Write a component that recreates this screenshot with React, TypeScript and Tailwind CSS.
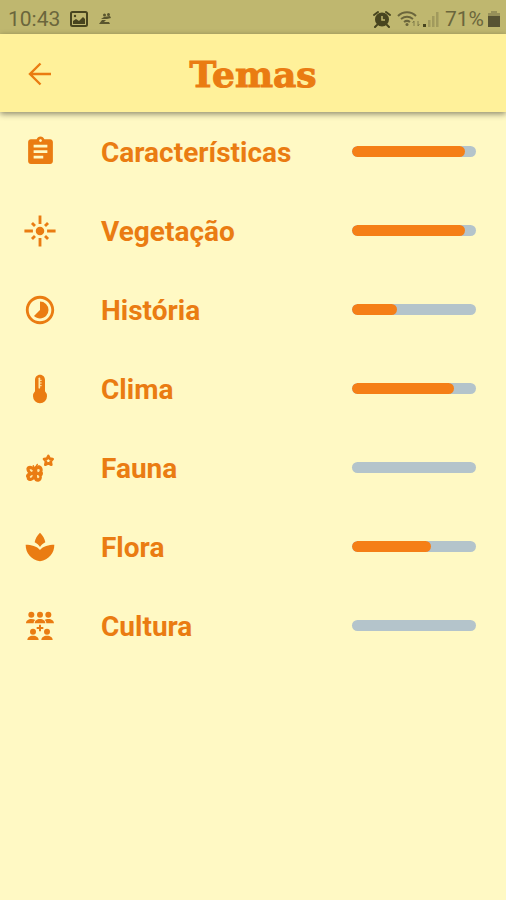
import React from 'react';
import { MdAssignment, MdFlare, MdTimelapse } from 'react-icons/md';

type Topic = {
  name: string;
  progress: number;
  icon: React.ReactNode;
};

const ThermometerIcon = () => (
  <svg viewBox="0 -5 150 150" className="size-[50px] shrink-0" fill="currentColor" aria-hidden="true">
    <path d="M75 27c-9 0-15 7-15 16v34a21 21 0 1 0 30 0V43c0-9-6-16-15-16z" />
    <path d="M73 38v28" stroke="#ffe9a8" strokeWidth="5" strokeLinecap="round" />
    <path d="M73 44h7M73 52h7M73 60h7" stroke="#ffe9a8" strokeWidth="3" />
  </svg>
);

const ButterflyIcon = () => (
  <svg viewBox="0 -9 150 150" className="size-[50px] shrink-0" aria-hidden="true">
    <path
      d="M58 66c-6-5-15-6-20-2-4 4-1 13 4 17-7 4-9 10-5 14-1 7 6 9 12 7 4-1 7-3 9-6 2 6 6 10 12 9 7-1 10-8 8-15 4-4 5-9 2-13 3-7 0-15-7-17-6-1-11 2-15 6z"
      fill="currentColor"
      stroke="currentColor"
      strokeWidth="4"
      strokeLinejoin="round"
    />
    <path d="M44 70c4-1 8 1 10 5l-5 3c-3-2-5-5-5-8zM66 71c3-3 7-3 8 0 1 4-2 7-6 8zM44 93c2-4 6-6 9-6 0 4-2 8-6 9zM66 87c4 0 7 2 7 6-1 4-5 5-7 1z" fill="#ffe9a8" />
    <path d="M58 66l-3-7M60 66l7-11" stroke="currentColor" strokeWidth="4" strokeLinecap="round" />
    <path d="M100 30l4 8 9 1-6 7 2 10-9-4-9 4 2-10-6-7 9-1z" fill="none" stroke="currentColor" strokeWidth="8" strokeLinejoin="round" />
  </svg>
);

const LotusIcon = () => (
  <svg viewBox="0 -6 150 150" className="size-[50px] shrink-0" fill="currentColor" aria-hidden="true">
    <path d="M75 26c-9 9-14 18-16 29 7 4 12 8 16 14 4-6 9-10 16-14-2-11-7-20-16-29z" />
    <path d="M32 62c17 0 34 4 43 16 9-12 26-16 43-16 0 25-16 45-43 50-27-5-43-25-43-50z" />
  </svg>
);

const PeopleIcon = () => (
  <svg viewBox="0 0 150 150" className="size-[50px] shrink-0" fill="currentColor" aria-hidden="true">
    <circle cx="49" cy="41" r="9" />
    <circle cx="75" cy="41" r="9" />
    <circle cx="100" cy="41" r="9" />
    <path d="M33 67c0-8 7-13 16-13 5 0 9 1 12 3-4 3-5 6-5 10z" />
    <path d="M59 67c0-8 7-13 16-13s16 5 16 13z" />
    <path d="M117 67c0-8-7-13-17-13-5 0-8 1-11 3 4 3 5 6 5 10z" />
    <path d="M75 71v20M65 81h20" stroke="currentColor" strokeWidth="6" />
    <circle cx="54" cy="92" r="9" />
    <circle cx="96" cy="92" r="9" />
    <path d="M37 117c0-8 7-13 17-13s17 5 17 13z" />
    <path d="M79 117c0-8 7-13 17-13s17 5 17 13z" />
  </svg>
);

const TOPICS: Topic[] = [
  { name: 'Características', progress: 91, icon: <MdAssignment size={33} /> },
  { name: 'Vegetação', progress: 91, icon: <MdFlare size={34} /> },
  { name: 'História', progress: 36, icon: <MdTimelapse size={34} /> },
  { name: 'Clima', progress: 82, icon: <ThermometerIcon /> },
  { name: 'Fauna', progress: 0, icon: <ButterflyIcon /> },
  { name: 'Flora', progress: 64, icon: <LotusIcon /> },
  { name: 'Cultura', progress: 0, icon: <PeopleIcon /> }
];

const StatusBar = () => (
  <div className="h-[34px] bg-[#bfb76f] text-[#6b663c] flex items-center justify-between pl-2 pr-1.5 pt-1 text-[21px] leading-6">
    <div className="flex items-center">
      <span>10:43</span>
      <svg viewBox="0 0 18 16" className="w-[18px] h-4 ml-2.5 text-[#48451f]" aria-hidden="true">
        <rect x="1" y="1" width="16" height="14" rx="1.5" fill="none" stroke="currentColor" strokeWidth="2" />
        <path d="M3 13V10l3-2 3 2 4-4 2 2v5z" fill="currentColor" />
        <circle cx="5" cy="5" r="1.2" fill="currentColor" />
      </svg>
      <svg viewBox="0 0 14 14" className="size-3.5 ml-2.5 text-[#5a562e]" fill="currentColor" aria-hidden="true">
        <circle cx="6.500" cy="3" r="1.5" />
        <circle cx="10.500" cy="2.500" r="1.5" />
        <path d="M3 7l3-2 6-1 1 2-4 1zM1 12l3-4 4 0-2 2h5l1 2z" />
      </svg>
    </div>
    <div className="flex items-center">
      <svg viewBox="0 0 18 18" className="size-[18px] text-[#48451f]" aria-hidden="true">
        <circle cx="9" cy="9.500" r="7" fill="currentColor" />
        <path d="M1 5l4-3M17 5l-4-3M4 15l-2 2M14 15l2 2" stroke="currentColor" strokeWidth="2" strokeLinecap="round" />
        <path d="M9 6v4h3" fill="none" stroke="#bfb76f" strokeWidth="1.5" />
      </svg>
      <svg viewBox="0 0 24 18" className="w-6 h-[18px] ml-1.5" fill="none" stroke="currentColor" strokeWidth="2" aria-hidden="true">
        <path d="M1 6c5-5 13-5 18 0M4 9c4-3 8-3 12 0M7 12c2-1.500 4-1.500 6 0" />
        <circle cx="10" cy="14.500" r="1.500" fill="currentColor" stroke="none" />
        <path d="M17 16v-5l-1.500 2M21 11v5l1.500-2" strokeWidth="1" opacity="0.7" />
      </svg>
      <svg viewBox="0 0 18 16" className="w-[18px] h-4 ml-0.5" fill="currentColor" aria-hidden="true">
        <rect x="0" y="13" width="3" height="3" fill="#48451f" />
        <g opacity="0.35">
          <rect x="5" y="9" width="2.500" height="7" />
          <rect x="9" y="5" width="2.500" height="11" />
          <rect x="13" y="1" width="2.500" height="15" />
        </g>
      </svg>
      <span className="ml-1">71%</span>
      <svg viewBox="0 0 12 18" className="w-3 h-[18px] ml-1" aria-hidden="true">
        <path d="M3 1h6v2h3v4H0V3h3z" fill="#969059" />
        <path d="M0 6h12v11H0z" fill="#575333" />
      </svg>
    </div>
  </div>
);

const TopicRow: React.FC<{ topic: Topic }> = ({ topic }) => (
  <li>
    <button type="button" className="w-full h-[79px] pl-[15px] pr-[30px] flex items-center text-left">
      <span className="w-[50px] flex justify-center shrink-0">{topic.icon}</span>
      <span className="flex-1 ml-9 pt-0.5 text-[28px] leading-8 font-bold">{topic.name}</span>
      <span
        role="progressbar"
        aria-label={topic.name}
        aria-valuenow={topic.progress}
        className="block w-[124px] h-[11px] rounded-full bg-[#b4c4cb] overflow-hidden"
      >
        <span className="block h-full rounded-full bg-[#f57f17]" style={{ width: `${topic.progress}%` }} />
      </span>
    </button>
  </li>
);

const App: React.FC = () => {
  return (
    <div className="min-h-screen bg-[#fff9c4] text-[#ea7c12] font-['Roboto',sans-serif]">
      <StatusBar />
      <header className="relative h-[78px] pt-0.5 bg-[#fff19a] shadow-[0_2px_6px_rgba(0,0,0,0.45)] grid grid-cols-[80px_1fr_80px] items-center">
        <button type="button" aria-label="Voltar" className="flex justify-center">
          <svg viewBox="0 0 24 24" className="size-6" fill="none" stroke="currentColor" strokeWidth="2.4" aria-hidden="true">
            <path d="M23 12H2.500M12.500 1.500L2 12l10.500 10.500" />
          </svg>
        </button>
        <h1 className="text-center font-['DejaVu_Serif',serif] text-[36px] leading-10 font-bold [-webkit-text-stroke:1px_currentColor]">
          Temas
        </h1>
      </header>
      <ul>
        {TOPICS.map(topic => (
          <TopicRow key={topic.name} topic={topic} />
        ))}
      </ul>
    </div>
  );
};

export default App;
